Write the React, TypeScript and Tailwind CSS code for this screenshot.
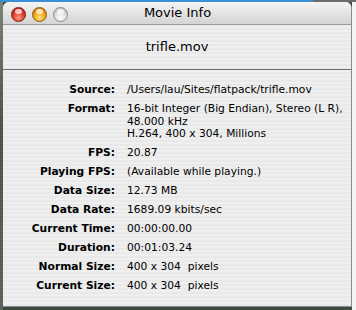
const rows: { label: string; lines: string[] }[] = [
  { label: "Source:", lines: ["/Users/lau/Sites/flatpack/trifle.mov"] },
  {
    label: "Format:",
    lines: [
      "16-bit Integer (Big Endian), Stereo (L R),",
      "48.000 kHz",
      "H.264, 400 x 304, Millions",
    ],
  },
  { label: "FPS:", lines: ["20.87"] },
  { label: "Playing FPS:", lines: ["(Available while playing.)"] },
  { label: "Data Size:", lines: ["12.73 MB"] },
  { label: "Data Rate:", lines: ["1689.09 kbits/sec"] },
  { label: "Current Time:", lines: ["00:00:00.00"] },
  { label: "Duration:", lines: ["00:01:03.24"] },
  { label: "Normal Size:", lines: ["400 x 304  pixels"] },
  { label: "Current Size:", lines: ["400 x 304  pixels"] },
];

const Light = ({ kind }: { kind: "close" | "min" | "zoom" }) => {
  const bg =
    kind === "close"
      ? "bg-[radial-gradient(circle_at_50%_75%,#ff9a8a_0%,#e0402f_45%,#a8180f_100%)] border-[#7a1a12]"
      : kind === "min"
      ? "bg-[radial-gradient(circle_at_50%_75%,#ffe88a_0%,#f0a818_45%,#b86a08_100%)] border-[#8a5a10]"
      : "bg-[radial-gradient(circle_at_50%_75%,#ffffff_0%,#dcdcdc_50%,#a8a8a8_100%)] border-[#8c8c8c]";
  return (
    <span className={`relative w-[15px] h-[15px] rounded-full border ${bg}`}>
      <span className="absolute left-[3px] top-[1px] w-[7px] h-[5px] rounded-full bg-white/70" />
    </span>
  );
};

export default function App() {
  return (
    <div className="w-[356px] h-[310px] flex flex-col bg-[#3d4a3e] overflow-hidden font-['DejaVu_Sans',sans-serif] text-black">
      {/* desktop strip on top */}
      <div className="h-[2px] flex">
        <div className="w-[313px] bg-[#3b8fd6]" />
        <div className="flex-1 bg-[#6b6b6b]" />
      </div>
      <div className="flex flex-1">
        <div className="w-[3px] bg-[linear-gradient(#7a8477,#4a5548_40%,#5c6658)]" />

        {/* window */}
        <div className="w-[349px] h-[305px] flex flex-col rounded-t-[6px] overflow-hidden border-r border-b border-[#8c8c8c] bg-[repeating-linear-gradient(#efefef_0px,#efefef_2px,#e9e9e9_2px,#e9e9e9_4px)]">
          {/* title bar */}
          <div className="h-[23px] flex items-center relative bg-[linear-gradient(#f4f4f4,#d4d4d4)] border-b border-[#9a9a9a]">
            <div className="flex items-center gap-[6px] pl-[8px] pt-[2px]">
              <Light kind="close" />
              <Light kind="min" />
              <Light kind="zoom" />
            </div>
            <div className="absolute inset-0 flex items-center justify-center text-[13px] pl-[1px]">
              Movie Info
            </div>
          </div>

          {/* file name */}
          <div className="h-[45px] flex items-center justify-center text-[13px] pb-[1px] border-b border-[#6e6e6e]">
            trifle.mov
          </div>

          {/* info rows */}
          <div className="flex flex-col gap-[7px] pt-[14px] text-[10.7px] leading-[12px]">
            {rows.map((r) => (
              <div key={r.label} className="flex">
                <div className="w-[113px] text-right font-bold pr-[1px]">{r.label}</div>
                <div className="pl-[11px] flex flex-col whitespace-pre">
                  {r.lines.map((l, i) => (
                    <span key={l} className={i === 1 ? "pt-[1px]" : ""}>
                      {l}
                    </span>
                  ))}
                </div>
              </div>
            ))}
          </div>
        </div>

        <div className="flex-1 bg-[#f4f4f4]" />
      </div>
    </div>
  );
}
